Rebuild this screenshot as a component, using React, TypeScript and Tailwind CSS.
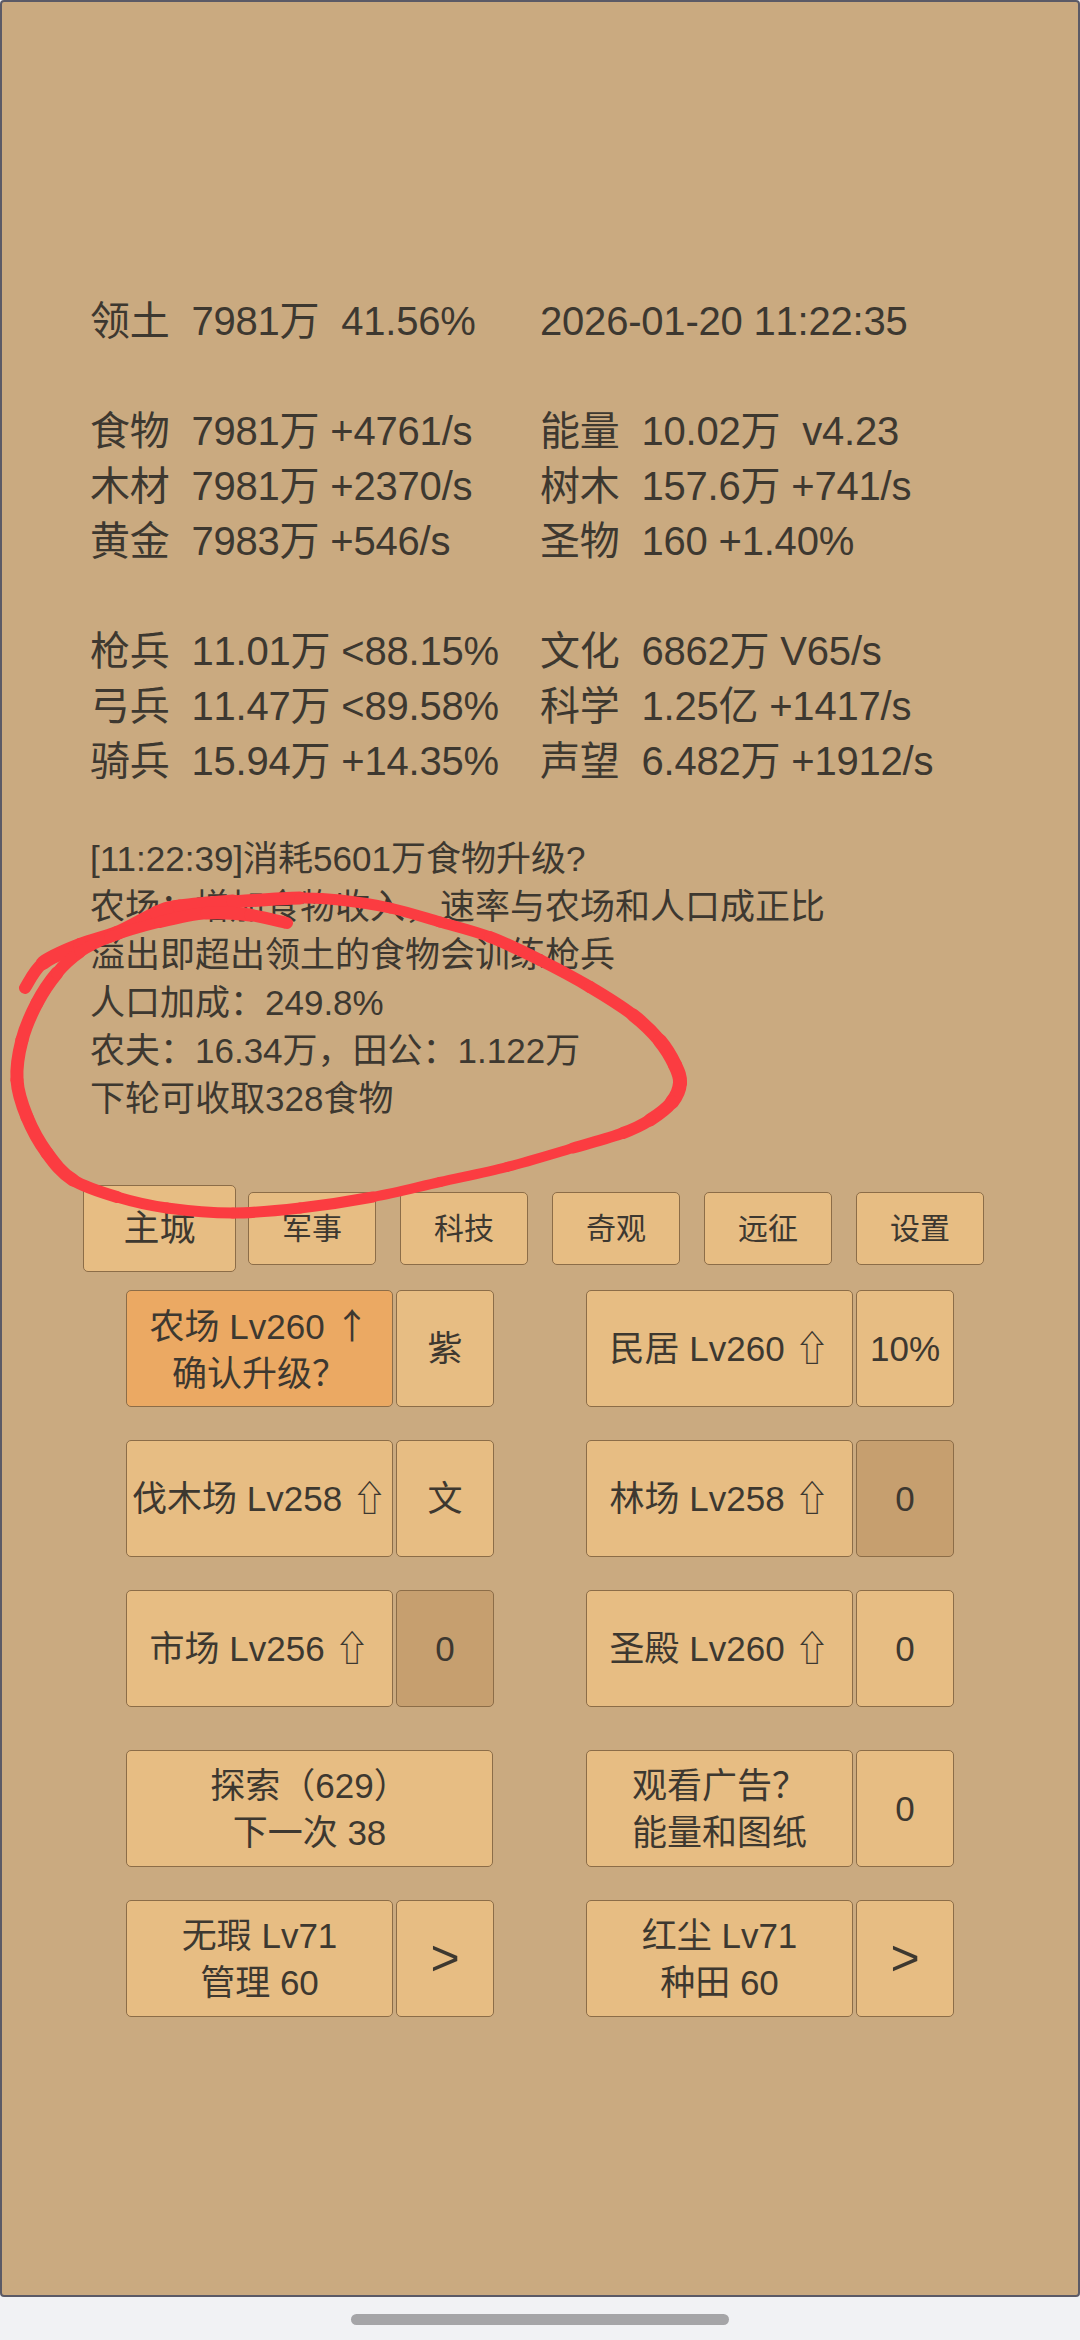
import type { ReactNode } from 'react'

const font = 'font-["Liberation_Sans","Noto_Sans_CJK_SC",sans-serif]'

const stats: [string, string][][] = [
  [['领土  7981万  41.56%', '2026-01-20 11:22:35']],
  [
    ['食物  7981万 +4761/s', '能量  10.02万  v4.23'],
    ['木材  7981万 +2370/s', '树木  157.6万 +741/s'],
    ['黄金  7983万 +546/s', '圣物  160 +1.40%'],
  ],
  [
    ['枪兵  11.01万 <88.15%', '文化  6862万 V65/s'],
    ['弓兵  11.47万 <89.58%', '科学  1.25亿 +1417/s'],
    ['骑兵  15.94万 +14.35%', '声望  6.482万 +1912/s'],
  ],
]

const log = [
  '[11:22:39]消耗5601万食物升级?',
  '农场：增加食物收入，速率与农场和人口成正比',
  '溢出即超出领土的食物会训练枪兵',
  '人口加成：249.8%',
  '农夫：16.34万，田公：1.122万',
  '下轮可收取328食物',
]

const tabs = ['军事', '科技', '奇观', '远征', '设置']

const btn = 'flex h-[117px] items-center justify-center whitespace-pre-line rounded-[5px] border border-[#8c6d48] text-center text-[35px] leading-[47px]'
const on = 'bg-[#e7bd83]'
const dim = 'bg-[#c69f6f]'
const hot = 'bg-[#eba963]'

// marker stroke: x, y, stroke width
const loop: [number, number, number][] = [
  [25, 988, 12], [43, 963, 14], [80, 945, 14], [117, 933, 14], [157, 913, 15], [180, 907, 15], [233, 902, 13],
  [300, 898, 11], [340, 900, 11], [390, 908, 11], [440, 922, 11], [490, 937, 12], [540, 960, 12], [590, 987, 12],
  [633, 1015, 13], [660, 1041, 14], [675, 1065, 14], [680, 1083, 14], [672, 1102, 13], [650, 1120, 12], [623, 1133, 11],
  [573, 1148, 10], [507, 1167, 10], [440, 1182, 10], [373, 1197, 11], [300, 1208, 11], [233, 1213, 11],
  [167, 1208, 11], [117, 1197, 12], [73, 1180, 13], [47, 1153, 13], [27, 1117, 13], [17, 1080, 13], [22, 1040, 13],
  [37, 1003, 13], [57, 973, 12], [80, 952, 11], [110, 937, 11], [160, 922, 12], [207, 913, 13], [250, 915, 12], [287, 923, 8],
]

function segment(i: number) {
  const a = loop[Math.max(i - 1, 0)]
  const b = loop[i]
  const c = loop[i + 1]
  const e = loop[Math.min(i + 2, loop.length - 1)]
  return `M${b[0]} ${b[1]} C${b[0] + (c[0] - a[0]) / 6} ${b[1] + (c[1] - a[1]) / 6} ${c[0] - (e[0] - b[0]) / 6} ${c[1] - (e[1] - b[1]) / 6} ${c[0]} ${c[1]}`
}

function Pair({ a, b, aClass = on, bClass = on }: { a: ReactNode; b: ReactNode; aClass?: string; bClass?: string }) {
  return (
    <div className="flex w-[368px] gap-[3px]">
      <button className={`${btn} ${aClass} w-[267px]`}>{a}</button>
      <button className={`${btn} ${bClass} w-[98px]`}>{b}</button>
    </div>
  )
}

const chevron = <span className="text-[50px]">&gt;</span>

export default function App() {
  return (
    <div className={`${font} relative h-[2340px] w-[1080px] overflow-hidden bg-[#f1f2f4] text-[#3d3830]`}>
      <div className="h-[2297px] rounded-[4px] border-2 border-[#5b5a66] bg-[#caaa80] pl-[88px] pt-[292px]">
        <div className="flex flex-col gap-[55px] text-[40px] leading-[55px] tracking-[-0.2px] [font-kerning:none]">
          {stats.map((group, i) => (
            <div key={i}>
              {group.map(([l, r]) => (
                <div key={l} className="grid grid-cols-[450px_1fr] whitespace-pre">
                  <span>{l}</span>
                  <span>{r}</span>
                </div>
              ))}
            </div>
          ))}
        </div>

        <div className="mt-[46px] text-[35px] leading-[48px]">
          {log.map((l) => (
            <div key={l} className="whitespace-pre">{l}</div>
          ))}
        </div>

        <div className="-ml-[7px] mt-[62px] flex items-center">
          <button className="mr-[12px] h-[87px] w-[153px] rounded-[5px] border border-[#8c6d48] bg-[#e7bd83] text-[36px]">主城</button>
          <div className="flex gap-[24px]">
            {tabs.map((t) => (
              <button key={t} className="h-[73px] w-[128px] rounded-[5px] border border-[#8c6d48] bg-[#e7bd83] text-[30px]">{t}</button>
            ))}
          </div>
        </div>

        <div className="ml-[36px] mt-[18px] grid w-[828px] grid-cols-[368px_368px] gap-x-[92px]">
          <div className="contents">
            <Pair
              a={<span>农场 Lv260 <span className='font-["Noto_Sans_CJK_SC"]'>↑</span>{'\n'}确认升级？</span>}
              b="紫"
              aClass={hot}
            />
            <Pair a="民居 Lv260 ⇧" b="10%" />
          </div>
          <div className="col-span-2 mt-[33px] grid grid-cols-subgrid">
            <Pair a="伐木场 Lv258 ⇧" b="文" />
            <Pair a="林场 Lv258 ⇧" b="0" bClass={dim} />
          </div>
          <div className="col-span-2 mt-[33px] grid grid-cols-subgrid">
            <Pair a="市场 Lv256 ⇧" b="0" bClass={dim} />
            <Pair a="圣殿 Lv260 ⇧" b="0" />
          </div>
          <div className="col-span-2 mt-[43px] grid grid-cols-subgrid">
            <button className={`${btn} ${on} w-[367px]`}>{'探索（629）\n下一次 38'}</button>
            <Pair a={'观看广告？\n能量和图纸'} b="0" />
          </div>
          <div className="col-span-2 mt-[33px] grid grid-cols-subgrid">
            <Pair a={'无瑕 Lv71\n管理 60'} b={chevron} />
            <Pair a={'红尘 Lv71\n种田 60'} b={chevron} />
          </div>
        </div>
      </div>

      <div className="mx-auto mt-[17px] h-[11px] w-[378px] rounded-full bg-[#a5a5a7]" />

      {/* red marker scribble drawn over the page */}
      <svg className="pointer-events-none absolute left-0 top-0" width="1080" height="2340" fill="none" stroke="#fb3c41" strokeLinecap="round">
        {loop.slice(0, -1).map((p, i) => (
          <path key={i} strokeWidth={p[2]} d={segment(i)} />
        ))}
      </svg>
    </div>
  )
}
